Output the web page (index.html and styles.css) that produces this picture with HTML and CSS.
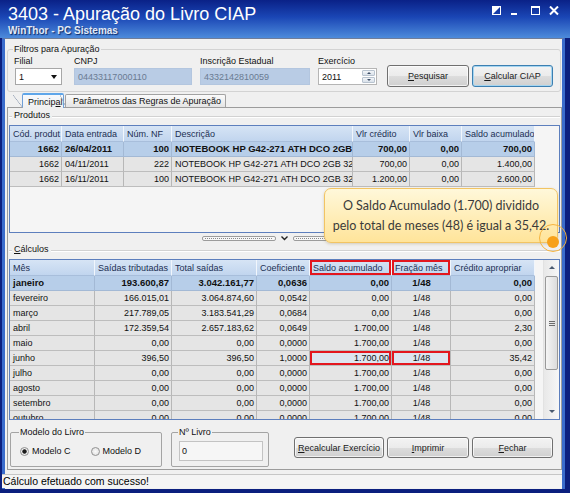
FILE: index.html
```html
<!DOCTYPE html>
<html lang="pt-BR">

<head>
  <meta charset="UTF-8" />
  <meta name="viewport" content="width=device-width, initial-scale=1" />
  <title>3403 - Apuração do Livro CIAP</title>
  <link rel="stylesheet" href="styles.css">
</head>

<body>
  <div class="window">
    <div class="titlebar">
      <div>
        <div class="title">3403 - Apuração do Livro CIAP</div>
        <div class="subtitle">WinThor - PC Sistemas</div>
      </div>
      <svg class="win-controls" width="68" height="10" viewBox="0 0 68 10">
        <rect x="0.5" y="0.5" width="8" height="8" fill="none" stroke="#fff" />
        <polygon points="0,0 9,0 0,9" fill="#fff" />
        <rect x="19" y="7" width="6" height="2" fill="#fff" />
        <rect x="39.5" y="0.5" width="8" height="8" fill="none" stroke="#fff" />
        <rect x="39" y="0" width="9" height="2" fill="#fff" />
        <path d="M58 0.5 L66 8.5 M66 0.5 L58 8.5" stroke="#fff" stroke-width="2" />
      </svg>
    </div>

    <div class="frame">
      <div class="client">
        <fieldset class="group filtros">
          <legend>Filtros para Apuração</legend>
          <div class="filter-row">
            <div class="field">
              <label>Filial</label>
              <div class="combo"><span>1</span><i class="arrow-down"></i></div>
            </div>
            <div class="field">
              <label>CNPJ</label>
              <div class="readonly cnpj">04433117000110</div>
            </div>
            <div class="field">
              <label>Inscrição Estadual</label>
              <div class="readonly ie">4332142810059</div>
            </div>
            <div class="field">
              <label>Exercício</label>
              <div class="spin">
                <span>2011</span>
                <div class="spin-buttons">
                  <i class="spin-up"></i>
                  <i class="spin-down"></i>
                </div>
              </div>
            </div>
            <button class="btn btn-pesquisar"><u>P</u>esquisar</button>
            <button class="btn btn-calcular focused"><u>C</u>alcular CIAP</button>
          </div>
        </fieldset>

        <div class="tabs">
          <div class="tab active">Princip<u>a</u>l</div>
          <div class="tab">Parâmetros das Regras de Apuração</div>
        </div>

        <div class="tab-panel">
          <div class="section-title">Produtos</div>
          <div class="grid grid-produtos">
            <table>
              <colgroup>
                <col style="width:52px">
                <col style="width:62px">
                <col style="width:48px">
                <col style="width:181px">
                <col style="width:57px">
                <col style="width:52px">
                <col style="width:73px">
              </colgroup>
              <tr>
                <th>Cód. produt</th>
                <th>Data entrada</th>
                <th>Núm. NF</th>
                <th>Descrição</th>
                <th>Vlr crédito</th>
                <th>Vlr baixa</th>
                <th>Saldo acumulado</th>
              </tr>
              <tr class="selected">
                <td class="num">1662</td>
                <td>26/04/2011</td>
                <td class="num">100</td>
                <td>NOTEBOOK HP G42-271 ATH DCO 2GB 320GB</td>
                <td class="num">700,00</td>
                <td class="num">0,00</td>
                <td class="num">700,00</td>
              </tr>
              <tr>
                <td class="num">1662</td>
                <td>04/11/2011</td>
                <td class="num">222</td>
                <td>NOTEBOOK HP G42-271 ATH DCO 2GB 320GB</td>
                <td class="num">700,00</td>
                <td class="num">0,00</td>
                <td class="num">1.400,00</td>
              </tr>
              <tr>
                <td class="num">1662</td>
                <td>16/11/2011</td>
                <td class="num">100</td>
                <td>NOTEBOOK HP G42-271 ATH DCO 2GB 320GB</td>
                <td class="num">1.200,00</td>
                <td class="num">0,00</td>
                <td class="num">2.600,00</td>
              </tr>
            </table>
          </div>

          <div class="splitter">
            <span class="handle"></span>
            <svg width="7" height="5" viewBox="0 0 7 5">
              <polyline points="0.5,0.5 3.5,3.5 6.5,0.5" fill="none" stroke="#222" stroke-width="1.4" />
            </svg>
            <span class="handle"></span>
          </div>

          <div class="section-title"><span><u>C</u>álculos</span></div>
          <div class="grid grid-calculos">
            <table>
              <colgroup>
                <col style="width:85px">
                <col style="width:77px">
                <col style="width:85px">
                <col style="width:53px">
                <col style="width:82px">
                <col style="width:59px">
                <col style="width:84px">
              </colgroup>
              <tr>
                <th>Mês</th>
                <th>Saídas tributadas</th>
                <th>Total saídas</th>
                <th>Coeficiente</th>
                <th class="mark">Saldo acumulado</th>
                <th class="mark">Fração mês</th>
                <th>Crédito apropriar</th>
              </tr>
              <tr class="selected">
                <td>janeiro</td>
                <td class="num">193.600,87</td>
                <td class="num">3.042.161,77</td>
                <td class="num">0,0636</td>
                <td class="num">0,00</td>
                <td class="center">1/48</td>
                <td class="num">0,00</td>
              </tr>
              <tr>
                <td>fevereiro</td>
                <td class="num">166.015,01</td>
                <td class="num">3.064.874,60</td>
                <td class="num">0,0542</td>
                <td class="num">0,00</td>
                <td class="center">1/48</td>
                <td class="num">0,00</td>
              </tr>
              <tr>
                <td>março</td>
                <td class="num">217.789,05</td>
                <td class="num">3.183.541,29</td>
                <td class="num">0,0684</td>
                <td class="num">0,00</td>
                <td class="center">1/48</td>
                <td class="num">0,00</td>
              </tr>
              <tr>
                <td>abril</td>
                <td class="num">172.359,54</td>
                <td class="num">2.657.183,62</td>
                <td class="num">0,0649</td>
                <td class="num">1.700,00</td>
                <td class="center">1/48</td>
                <td class="num">2,30</td>
              </tr>
              <tr>
                <td>maio</td>
                <td class="num">0,00</td>
                <td class="num">0,00</td>
                <td class="num">0,0000</td>
                <td class="num">1.700,00</td>
                <td class="center">1/48</td>
                <td class="num">0,00</td>
              </tr>
              <tr>
                <td>junho</td>
                <td class="num">396,50</td>
                <td class="num">396,50</td>
                <td class="num">1,0000</td>
                <td class="num mark light">1.700,00</td>
                <td class="center mark light">1/48</td>
                <td class="num">35,42</td>
              </tr>
              <tr>
                <td>julho</td>
                <td class="num">0,00</td>
                <td class="num">0,00</td>
                <td class="num">0,0000</td>
                <td class="num">1.700,00</td>
                <td class="center">1/48</td>
                <td class="num">0,00</td>
              </tr>
              <tr>
                <td>agosto</td>
                <td class="num">0,00</td>
                <td class="num">0,00</td>
                <td class="num">0,0000</td>
                <td class="num">1.700,00</td>
                <td class="center">1/48</td>
                <td class="num">0,00</td>
              </tr>
              <tr>
                <td>setembro</td>
                <td class="num">0,00</td>
                <td class="num">0,00</td>
                <td class="num">0,0000</td>
                <td class="num">1.700,00</td>
                <td class="center">1/48</td>
                <td class="num">0,00</td>
              </tr>
              <tr>
                <td>outubro</td>
                <td class="num">0,00</td>
                <td class="num">0,00</td>
                <td class="num">0,0000</td>
                <td class="num">1.700,00</td>
                <td class="center">1/48</td>
                <td class="num">0,00</td>
              </tr>
            </table>
            <div class="grid-filler"></div>
            <div class="scrollbar">
              <div class="sb-btn sb-up"></div>
              <div class="sb-thumb"></div>
              <div class="sb-track"></div>
              <div class="sb-btn sb-down"></div>
            </div>
          </div>

          <div class="bottom-row">
            <fieldset class="group modelo">
              <legend>Modelo do Livro</legend>
              <div class="radio-row">
                <span class="radio checked"><i></i>Modelo C</span>
                <span class="radio"><i></i>Modelo D</span>
              </div>
            </fieldset>
            <fieldset class="group livro">
              <legend>Nº Livro</legend>
              <div class="text-input">0</div>
            </fieldset>
            <button class="btn btn-recalcular"><u>R</u>ecalcular Exercício</button>
            <button class="btn btn-imprimir"><u>I</u>mprimir</button>
            <button class="btn btn-fechar"><u>F</u>echar</button>
          </div>
        </div>

        <div class="statusbar">Cálculo efetuado com sucesso!</div>
      </div>
    </div>

    <div class="callout">O Saldo Acumulado (1.700) dividido<br>pelo total de meses (48) é igual a 35,42.</div>
    <svg class="callout-dot" width="32" height="32" viewBox="0 0 32 32">
      <circle cx="15" cy="15" r="13.5" fill="none" stroke="#f6b43e" stroke-width="1" />
      <circle cx="15" cy="19" r="6" fill="#f7a11a" />
    </svg>
  </div>
</body>

</html>
```

FILE: styles.css
```css
* {
  box-sizing: border-box;
}

html,
body {
  margin: 0;
  padding: 0;
}

body {
  width: 570px;
  height: 493px;
  overflow: hidden;
  background: #0b1f7e;
  font-family: "Liberation Sans", Arial, sans-serif;
  font-size: 9px;
  color: #111;
}

.window {
  position: relative;
  width: 570px;
  height: 493px;
  display: flex;
  flex-direction: column;
  background: #0b1f7e;
}

/* title bar */
.titlebar {
  height: 38px;
  flex: none;
  display: flex;
  justify-content: space-between;
  padding: 4px 10px 0 8px;
  background: linear-gradient(#0a2187 0%, #1a46b5 45%, #4d8bdb 100%);
  color: white;
}

.title {
  font-size: 18px;
  line-height: 20px;
}

.subtitle {
  margin-top: 1px;
  font-size: 10px;
  font-weight: bold;
  line-height: 12px;
  color: #e2eaf7;
  text-shadow: 1px 1px 1px #0c2a66;
}

.win-controls {
  margin-top: 2px;
}

/* frame + client area */
.frame {
  flex: 1;
  display: flex;
  padding: 0 5px 4px 2px;
}

.client {
  flex: 1;
  display: flex;
  flex-direction: column;
  background: #f0f0f0;
  border-left: 3px solid #3a6ccc;
  border-right: 3px solid #3a6ccc;
  border-top: 1px solid #6f7d99;
  padding-top: 5px;
}

.group {
  margin: 0;
  border: 1px solid #d3d3d3;
  border-radius: 3px;
}

.group legend {
  padding: 0 1px;
  margin-left: -1px;
  line-height: 10px;
}

.filtros {
  margin: 0 1px 1px 2px;
  padding: 2px 6px 4px 6px;
}

.filter-row {
  display: flex;
  align-items: flex-start;
}

.field {
  display: flex;
  flex-direction: column;
}

.field label {
  line-height: 11px;
  margin-bottom: 1px;
}

.field + .field {
  margin-left: 8px;
}

.field:nth-child(2) {
  margin-left: 12px;
}

.combo {
  width: 47px;
  height: 17px;
  margin-left: 1px;
  display: flex;
  align-items: center;
  justify-content: space-between;
  padding: 0 4px 0 3px;
  background: white;
  border: 1px solid #a7a7a7;
}

.arrow-down {
  border-left: 3px solid transparent;
  border-right: 3px solid transparent;
  border-top: 4px solid #111;
}

.readonly {
  height: 17px;
  display: flex;
  align-items: center;
  padding-left: 3px;
  background: #b9cce5;
  border: 1px solid #b3c6df;
  color: #6a7b92;
}

.cnpj {
  width: 118px;
}

.ie {
  width: 110px;
}

.spin {
  width: 59px;
  height: 17px;
  display: flex;
  align-items: center;
  justify-content: space-between;
  padding: 0 1px 0 3px;
  background: white;
  border: 1px solid #b5b5b5;
}

.spin-buttons {
  display: flex;
  flex-direction: column;
  gap: 1px;
}

.spin-buttons i {
  width: 13px;
  height: 6px;
  display: flex;
  align-items: center;
  justify-content: center;
  background: linear-gradient(#f2f5f8, #d9e1ea);
  border: 1px solid #b8c3cf;
  border-radius: 1px;
}

.spin-up::after {
  content: "";
  border-left: 2px solid transparent;
  border-right: 2px solid transparent;
  border-bottom: 2px solid #3c4d66;
}

.spin-down::after {
  content: "";
  border-left: 2px solid transparent;
  border-right: 2px solid transparent;
  border-top: 2px solid #3c4d66;
}

.btn {
  height: 22px;
  padding: 0;
  font-family: inherit;
  font-size: 9px;
  color: #1a1a1a;
  border: 1px solid #707070;
  border-radius: 3px;
  background: linear-gradient(#f3f3f3 0%, #ebebeb 50%, #dddddd 50%, #d0d0d0 100%);
  box-shadow: inset 0 0 0 1px rgba(255, 255, 255, 0.7);
}

.btn.focused {
  border-color: #3c7fb1;
  box-shadow: inset 0 0 0 1px #a5d5f0;
}

.btn-pesquisar {
  width: 82px;
  margin: 9px 0 0 10px;
}

.btn-calcular {
  width: 81px;
  margin: 9px 0 0 3px;
}

/* tabs */
.tabs {
  height: 15px;
  flex: none;
  display: flex;
  align-items: flex-end;
  margin-left: 12px;
  position: relative;
  z-index: 1;
}

.tab {
  position: relative;
  height: 13px;
  line-height: 12px;
  padding: 0 6px;
  border: 1px solid #a2a2a2;
  border-bottom: none;
  border-radius: 2px 2px 0 0;
  background: linear-gradient(#fbfbfb, #e4e4e4);
  white-space: nowrap;
  margin-bottom: 1px;
}

.tab::before {
  content: "";
  position: absolute;
  left: -6px;
  top: 0;
  width: 6px;
  height: 100%;
  background: linear-gradient(to top right, transparent calc(50% - 0.6px), #9aa6b8 50%, transparent calc(50% + 0.6px));
}

.tab.active {
  height: 15px;
  width: 42px;
  margin-left: 5px;
  margin-bottom: 0;
  padding: 0 0 0 5px;
  line-height: 14px;
  border-color: #6f9fd6;
  border-top: 2px solid #5ea6ea;
  background: linear-gradient(#f6f9fd, #f0f0f0);
}

.tab.active::before {
  left: -10px;
  width: 10px;
}

.tab + .tab {
  width: 161px;
  margin-left: 1px;
  padding-left: 7px;
}

.tab-panel {
  height: 363px;
  flex: none;
  margin: -1px 0 0 2px;
  border: 1px solid #9c9c9c;
  padding: 2px 1px 0 1px;
  display: flex;
  flex-direction: column;
}

.section-title {
  display: flex;
  align-items: center;
  gap: 2px;
  height: 10px;
  line-height: 10px;
}

.section-title::before,
.section-title::after {
  content: "";
  height: 1px;
  margin-top: 2px;
  background: #d2d2d2;
  box-shadow: 0 1px 0 white;
}

.section-title::before {
  width: 3px;
}

.section-title::after {
  flex: 1;
}

/* grids */
.grid {
  flex: none;
  border: 1px solid #5d7fbd;
  background: #f5f5f5;
  overflow: hidden;
  margin-top: 5px;
}

.grid-produtos {
  height: 108px;
}

.grid-calculos {
  height: 161px;
  display: flex;
  align-items: flex-start;
}

.grid table {
  border-collapse: separate;
  border-spacing: 0;
  table-layout: fixed;
  width: 525px;
  flex: none;
}

.grid th,
.grid td {
  height: 15px;
  padding: 0 2px 0 3px;
  line-height: 14px;
  border-right: 1px solid #b7b7b7;
  border-bottom: 1px solid #bdbdbd;
  white-space: nowrap;
  overflow: hidden;
  text-overflow: clip;
  text-align: left;
  font-weight: normal;
}

.grid th {
  height: 16px;
  background: linear-gradient(#d6e4f5, #c1d5ee);
  border-right-color: #f1f6fc;
  border-bottom-color: #a8bedb;
  color: #1b2f52;
}

.grid td {
  background: #e5e5e5;
}

.grid td.num {
  text-align: right;
}

.grid td.center {
  text-align: center;
}

.grid tr.selected td {
  background: #b7cee9;
  font-weight: bold;
  font-size: 9.5px;
  border-right-color: #a3b9d5;
  border-bottom-color: #a3b9d5;
}

.grid .mark {
  box-shadow: inset 0 0 0 2px #e3161e;
}

.grid td.light {
  background: #dde5ef;
}

.grid-filler {
  flex: 1;
}

.scrollbar {
  width: 16px;
  height: 159px;
  flex: none;
  display: flex;
  flex-direction: column;
  background: linear-gradient(to right, #e8e8e8, #f7f7f7);
  border-left: 1px solid #e2e2e2;
}

.sb-btn {
  height: 15px;
  display: flex;
  align-items: center;
  justify-content: center;
}

.sb-up::after {
  content: "";
  border-left: 3px solid transparent;
  border-right: 3px solid transparent;
  border-bottom: 3px solid #4a5a70;
}

.sb-down::after {
  content: "";
  border-left: 3px solid transparent;
  border-right: 3px solid transparent;
  border-top: 3px solid #4a5a70;
}

.sb-thumb {
  height: 94px;
  margin: 1px 1px 0 1px;
  border: 1px solid #999;
  border-radius: 2px;
  background: linear-gradient(to right, #f5f5f5, #dcdcdc);
  display: flex;
  align-items: center;
  justify-content: center;
}

.sb-thumb::after {
  content: "";
  width: 6px;
  height: 1px;
  background: #6c6c6c;
  box-shadow: 0 2px 0 #6c6c6c, 0 -2px 0 #6c6c6c;
}

.sb-track {
  flex: 1;
}

/* splitter */
.splitter {
  height: 11px;
  flex: none;
  display: flex;
  align-items: center;
  justify-content: center;
  gap: 5px;
}

.handle {
  width: 74px;
  height: 5px;
  border: 1px solid #9c9c9c;
  border-radius: 2px;
  background: repeating-linear-gradient(90deg, #8a8a8a 0 1px, #f7f7f7 1px 2px) center / calc(100% - 4px) 1px no-repeat, #f7f7f7;
}

/* bottom row */
.bottom-row {
  display: flex;
  align-items: flex-start;
  margin-top: 7px;
}

.bottom-row .group {
  height: 40px;
  border-color: #a4a4a4;
  border-radius: 2px;
}

.modelo {
  width: 152px;
  margin-left: 1px;
  padding: 8px 6px 0 9px;
}

.radio-row {
  display: flex;
  height: 12px;
  align-items: center;
}

.radio {
  display: inline-flex;
  align-items: center;
  gap: 3px;
}

.radio + .radio {
  margin-left: 20px;
}

.radio i {
  width: 9px;
  height: 9px;
  border-radius: 50%;
  border: 1px solid #929292;
  background: radial-gradient(circle, #fafafa 0, #dcdcdc 100%);
}

.radio.checked i {
  background: radial-gradient(circle, #1b1b1b 0 1.8px, #f4f4f4 2.6px, #d6d6d6 100%);
}

.livro {
  width: 98px;
  margin-left: 9px;
  padding: 4px 5px 0 7px;
}

.text-input {
  width: 84px;
  height: 20px;
  display: flex;
  align-items: center;
  padding-left: 2px;
  background: #f6f6f6;
  border: 1px solid #c3c3c3;
}

.btn-recalcular {
  width: 90px;
  height: 21px;
  margin: 10px 0 0 25px;
}

.btn-imprimir {
  width: 82px;
  height: 21px;
  margin: 10px 0 0 3px;
}

.btn-fechar {
  width: 81px;
  height: 21px;
  margin: 10px 0 0 3px;
}

/* status bar */
.statusbar {
  height: 14px;
  margin: 4px 0 0 -3px;
  border-top: 1px solid #c6c6c6;
  background: #f4f4f4;
  font-size: 10.5px;
  line-height: 13px;
  padding-left: 1px;
  color: #000;
}

/* annotation callout */
.callout {
  position: absolute;
  left: 324px;
  top: 188px;
  width: 234px;
  height: 55px;
  padding-top: 7px;
  border: 1px solid #f2c463;
  border-radius: 7px;
  background: linear-gradient(#fff8da, #ffe49a);
  box-shadow: 0 1px 3px rgba(120, 90, 20, 0.25);
  font-family: Lato, "Open Sans", sans-serif;
  font-size: 12.5px;
  line-height: 20px;
  text-align: center;
  color: #3a3a3a;
}

.callout-dot {
  position: absolute;
  left: 538px;
  top: 223px;
}
```
